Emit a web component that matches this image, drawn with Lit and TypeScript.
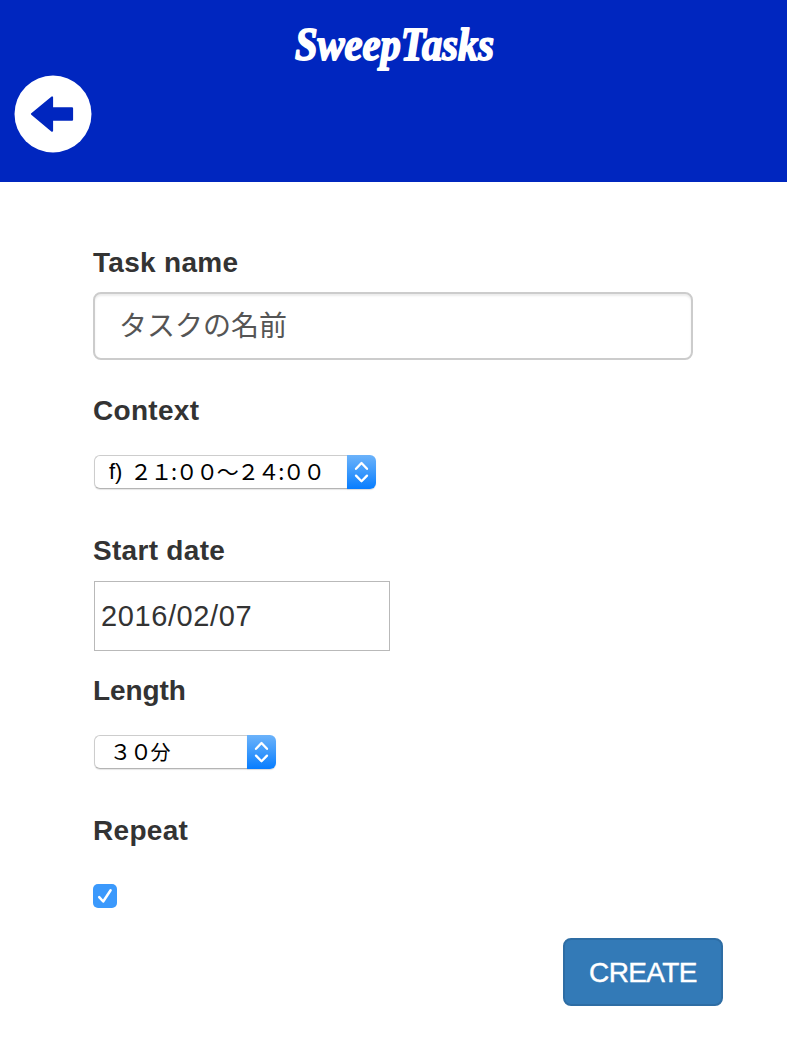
import { LitElement, html, css } from "lit";
import { customElement, property } from "lit/decorators.js";

@customElement("select-box")
class SelectBox extends LitElement {
  static styles = css`
    :host { display: flex; height: 34px; box-sizing: border-box; }
    .value {
      flex: 1; box-sizing: border-box; display: flex; align-items: center;
      border: 1px solid #cdcdcd; border-bottom-color: #b4b4b4; border-right: 0;
      border-radius: 6px 0 0 6px; background: #fff; color: #000;
      box-shadow: 0 1px 1px rgba(0, 0, 0, 0.1);
      font: 22px/32px "Liberation Sans", "Noto Sans CJK JP", sans-serif;
      white-space: pre; padding-left: 14px;
    }
    .arrows {
      width: 29px; height: 34px; border-radius: 0 6px 6px 0; overflow: hidden;
      background: linear-gradient(#6cb3fa, #3b99fc 50%, #077dff);
      box-shadow: 0 1px 1px rgba(0, 0, 0, 0.15);
    }
    svg { display: block; }
  `;
  render() {
    return html`
      <div class="value"><slot></slot></div>
      <div class="arrows">
        <svg width="29" height="34" viewBox="0 0 29 34" fill="none" stroke="#fff" stroke-width="2.3" stroke-linecap="round" stroke-linejoin="round">
          <path d="M9 13.8L14.5 8L20 13.8M9 20.6L14.5 26.2L20 20.6" />
        </svg>
      </div>`;
  }
}

@customElement("app-root")
class AppRoot extends LitElement {
  @property() taskName = "タスクの名前";
  @property() startDate = "2016/02/07";

  static styles = css`
    :host {
      display: block; min-height: 1058px; background: #fff; color: #333;
      font-family: "Liberation Sans", "Noto Sans CJK JP", sans-serif; font-size: 28px;
    }
    .header { height: 182px; background: #0026bf; box-sizing: border-box; padding-top: 14px; }
    .logo { display: block; margin: 0 auto; width: 290px; height: 61px; overflow: visible; }
    .logo text { font: italic 700 46px "Liberation Serif", serif; fill: #fff; stroke: #fff; stroke-width: 1.8px; stroke-linejoin: round; }
    .back { display: block; width: 78px; height: 78px; padding: 0; margin-left: 14px; border: 0; background: none; }
    .back svg { display: block; }
    .form { padding: 64px 64px 0 93px; display: flex; flex-direction: column; align-items: flex-start; }
    .label { font-weight: 700; height: 32px; line-height: 34px; letter-spacing: 0.3px; white-space: pre; }
    .label.tight { letter-spacing: -0.1px; }
    .name {
      width: 600px; height: 68px; box-sizing: border-box; margin: 14px 0 34px;
      border: 2px solid #ccc; border-radius: 8px; padding: 0 24px;
      line-height: 60px; color: #555; box-shadow: inset 0 2px 2px rgba(0, 0, 0, 0.075);
      font-family: "Noto Sans CJK JP", sans-serif;
    }
    .select { margin: 29px 0 45px 1px; }
    .context { width: 282px; }
    .length { width: 182px; }
    .jp {
      font-family: "Noto Sans CJK JP", sans-serif; letter-spacing: -1.5px;
      line-height: 28px; height: 32px; margin-left: 1.5px;
    }
    .length .jp { margin-left: 0.5px; }
    .unit { font-size: 20px; }
    .date {
      width: 296px; height: 70px; box-sizing: border-box; margin: 15px 0 23px 1px;
      border: 1px solid #b9b9b9; padding-left: 6px; line-height: 69px; font-size: 29px; letter-spacing: 0.6px;
    }
    .check { display: block; margin: 38px 0 30px; }
    .create {
      align-self: flex-end; width: 160px; height: 68px; box-sizing: border-box; padding: 1px 0 0;
      border: 2px solid #2e6da4; border-radius: 8px; background: #337ab7; color: #fff;
      font: 28px/62px "Liberation Sans", sans-serif; letter-spacing: -0.6px; text-align: center;
      -webkit-text-stroke: 0.4px #fff;
    }
  `;

  render() {
    return html`
      <header class="header">
        <svg class="logo" viewBox="0 0 290 61">
          <text x="46" y="46" textLength="199" lengthAdjust="spacingAndGlyphs">SweepTasks</text>
        </svg>
        <button class="back" aria-label="Back">
          <svg width="78" height="78" viewBox="0 0 78 78">
            <circle cx="39" cy="39" r="38.5" fill="#fff" />
            <path d="M18 39L38 22.5V33.3H58V44.7H38V55.7Z" fill="#0026bf" stroke="#0026bf" stroke-width="2.2" stroke-linejoin="round" />
          </svg>
        </button>
      </header>
      <main class="form">
        <div class="label">Task name</div>
        <div class="name">${this.taskName}</div>
        <div class="label">Context</div>
        <select-box class="select context">f) <span class="jp">２１:００～２４:００</span></select-box>
        <div class="label">Start date</div>
        <div class="date">${this.startDate}</div>
        <div class="label tight">Length</div>
        <select-box class="select length"><span class="jp">３０<span class="unit">分</span></span></select-box>
        <div class="label">Repeat</div>
        <svg class="check" role="checkbox" aria-checked="true" width="24" height="24" viewBox="0 0 24 24">
          <rect width="24" height="24" rx="5" fill="#3b99fc" />
          <path d="M6.2 13.2L10.2 17.5L17.6 6.3" fill="none" stroke="#fff" stroke-width="2.5" stroke-linecap="round" stroke-linejoin="round" />
        </svg>
        <button class="create">CREATE</button>
      </main>`;
  }
}
